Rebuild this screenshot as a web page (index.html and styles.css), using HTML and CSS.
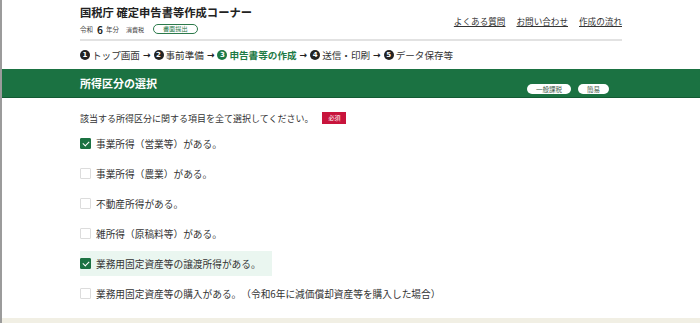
FILE: index.html
```html
<!DOCTYPE html>
<html lang="ja">

<head>
    <meta charset="UTF-8">
    <meta name="viewport" content="width=device-width, initial-scale=1.0">
    <title>所得区分の選択</title>
    <link rel="stylesheet" href="styles.css">
</head>

<body>
    <header class="site_header">
        <div class="inner">
            <div class="header_top">
                <div class="brand">
                    <h1 class="brand_title">国税庁 確定申告書等作成コーナー</h1>
                    <div class="brand_sub">
                        <span class="era">令和</span><b class="year">6</b><span class="era">年分</span>
                        <span class="tax">消費税</span>
                        <span class="pill_outline">書面提出</span>
                    </div>
                </div>
                <ul class="help_links">
                    <li><a href="javascript:;">よくある質問</a></li>
                    <li><a href="javascript:;">お問い合わせ</a></li>
                    <li><a href="javascript:;">作成の流れ</a></li>
                </ul>
            </div>

            <!-- ステップ -->
            <ol class="steps">
                <li><span class="num">1</span>トップ画面</li>
                <li class="arrow">→</li>
                <li><span class="num">2</span>事前準備</li>
                <li class="arrow">→</li>
                <li class="current_step"><span class="num">3</span>申告書等の作成</li>
                <li class="arrow">→</li>
                <li><span class="num">4</span>送信・印刷</li>
                <li class="arrow">→</li>
                <li><span class="num">5</span>データ保存等</li>
            </ol>
        </div>
    </header>

    <div class="section_bar">
        <div class="inner bar_inner">
            <h2 class="bar_title">所得区分の選択</h2>
            <div class="bar_pills">
                <span class="pill">一般課税</span>
                <span class="pill">簡易</span>
            </div>
        </div>
    </div>

    <main class="inner content">
        <p class="lead">該当する所得区分に関する項目を全て選択してください。<span class="required">必須</span></p>

        <ul class="choice_list">
            <li><label class="choice"><span class="box checked"></span>事業所得（営業等）がある。</label></li>
            <li><label class="choice"><span class="box"></span>事業所得（農業）がある。</label></li>
            <li><label class="choice"><span class="box"></span>不動産所得がある。</label></li>
            <li><label class="choice"><span class="box"></span>雑所得（原稿料等）がある。</label></li>
            <li><label class="choice focused"><span class="box checked"></span>業務用固定資産等の譲渡所得がある。</label></li>
            <li><label class="choice"><span class="box"></span>業務用固定資産等の購入がある。　（令和6年に減価償却資産等を購入した場合）</label></li>
        </ul>
    </main>

    <footer class="page_foot"></footer>
</body>

</html>
```

FILE: styles.css
```css
* {
    margin: 0px;
    padding: 0px;
    box-sizing: border-box;
}

ul,
ol {
    list-style: none;
}

a {
    color: #333;
}

body {
    font-family: "Noto Sans CJK JP", "Noto Sans", sans-serif;
    color: #333;
    background-color: #fff;
    border-left: 2px solid #9b9b9b;
    height: 323px;
    display: flex;
    flex-direction: column;
}

.inner {
    width: 542px;
    margin: 0 auto;
}


/* -------------------------ヘッダー------------------------- */
.header_top {
    display: flex;
    justify-content: space-between;
    align-items: flex-start;
    padding-top: 4px;
    padding-bottom: 4px;
    border-bottom: 2px solid #e2e2e2;
}

.brand_title {
    font-size: 11.3px;
    line-height: 16px;
    font-weight: bold;
    color: #222;
}

.brand_sub {
    display: flex;
    align-items: center;
    height: 12px;
    margin-top: 3px;
    font-size: 6.5px;
    color: #444;
}

.brand_sub .year {
    font-size: 10px;
    margin: 0 3px 0 4px;
    color: #222;
}

.brand_sub .tax {
    margin-left: 7px;
    font-size: 6px;
}

.pill_outline {
    margin-left: 9px;
    height: 10px;
    line-height: 8px;
    padding: 0 9px;
    border: 1px solid #2c7a4b;
    border-radius: 6px;
    color: #2c7a4b;
    font-size: 6.2px;
}

.help_links {
    display: flex;
    gap: 11px;
    margin-top: 11px;
    font-size: 8.6px;
    line-height: 12px;
}


/* -------------------------ステップ------------------------- */
.steps {
    display: flex;
    align-items: center;
    gap: 3px;
    padding: 6px 0 6px;
    height: 28px;
    font-size: 9.6px;
    color: #333;
}

.steps li {
    display: flex;
    align-items: center;
}

.steps .num {
    width: 10px;
    height: 10px;
    border-radius: 50%;
    margin-right: 2px;
    background-color: #222;
    color: #fff;
    font-family: "DejaVu Sans", sans-serif;
    font-size: 7px;
    font-weight: bold;
    line-height: 10px;
    text-align: center;
}

.steps .arrow {
    font-family: "DejaVu Sans", sans-serif;
    font-weight: bold;
    font-size: 9px;
    color: #222;
}

.steps .current_step {
    color: #1d7a45;
    font-weight: bold;
}

.steps .current_step .num {
    background-color: #1d7a45;
}


/* -------------------------見出しバー------------------------- */
.section_bar {
    flex: none;
    height: 29px;
    background-color: #1b7242;
    border-bottom: 1px solid #135a33;
}

.bar_inner {
    display: flex;
    justify-content: space-between;
    height: 100%;
    align-items: center;
}

.bar_title {
    font-size: 11px;
    font-weight: bold;
    color: #fff;
}

.bar_pills {
    align-self: flex-end;
    display: flex;
    gap: 7px;
    margin-bottom: 3px;
    padding-right: 13px;
}

.pill {
    height: 10px;
    line-height: 10px;
    padding: 0 9px;
    border-radius: 6px;
    background-color: #fff;
    color: #3d5a47;
    font-size: 6.5px;
}


/* -------------------------本文------------------------- */
.content {
    flex: 1;
    padding-top: 12px;
}

.lead {
    display: flex;
    align-items: center;
    height: 16px;
    font-size: 9px;
}

.required {
    margin-left: 9px;
    height: 12px;
    line-height: 12px;
    padding: 0 6px;
    background-color: #c8143c;
    color: #fff;
    font-size: 6px;
}

.choice_list {
    display: flex;
    flex-direction: column;
    gap: 5px;
    margin-top: 5px;
}

.choice_list li {
    display: flex;
}

.choice {
    display: flex;
    align-items: center;
    gap: 5px;
    height: 25px;
    padding-right: 11px;
    font-size: 9.7px;
    color: #333;
    cursor: pointer;
}

.choice.focused {
    background-color: #eaf6f0;
}

.box {
    position: relative;
    flex: none;
    width: 11px;
    height: 11px;
    border: 1px solid #dcdcdc;
    border-radius: 1px;
    background-color: #fff;
}

.box.checked {
    border-color: #1b7242;
    background-color: #1b7242;
}

/* チェックマーク */
.box.checked::after {
    content: "";
    position: absolute;
    left: 3px;
    top: 1px;
    width: 3px;
    height: 5px;
    border-right: 1.6px solid #fff;
    border-bottom: 1.6px solid #fff;
    transform: rotate(45deg);
}


/* -------------------------フッター------------------------- */
.page_foot {
    flex: none;
    height: 5px;
    background-color: #f1efe4;
}
```
